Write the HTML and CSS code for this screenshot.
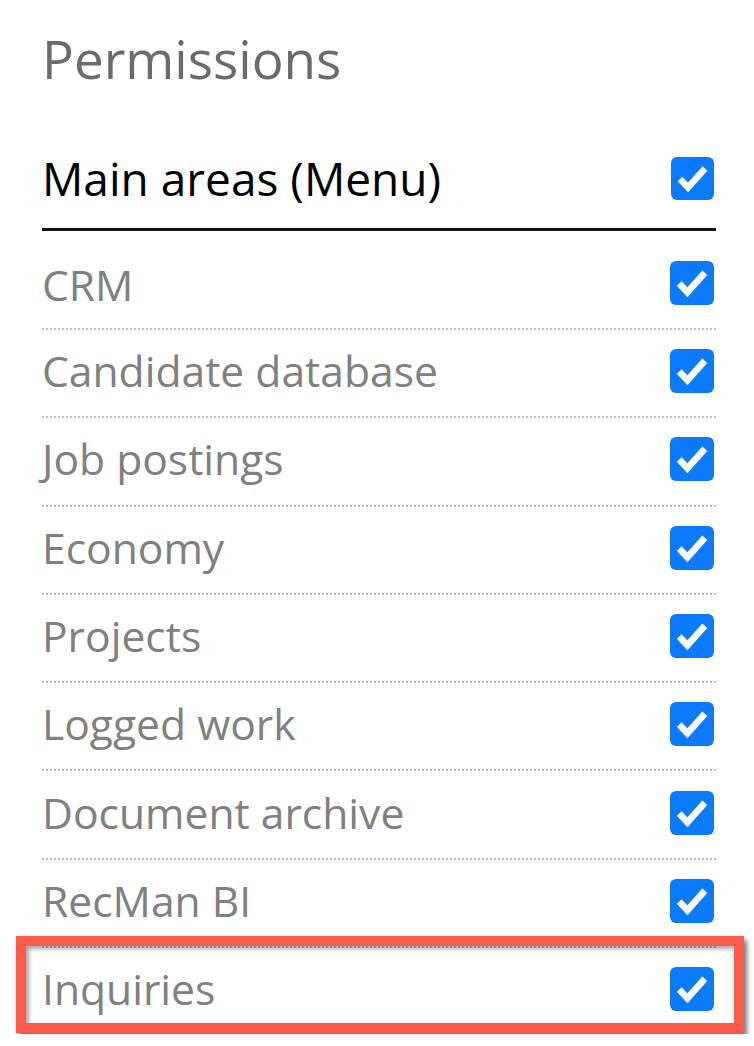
FILE: index.html
```html
<!DOCTYPE html>
<html lang="en">
<head>
<meta charset="utf-8">
<title>Permissions</title>
<link rel="stylesheet" href="styles.css">
</head>
<body>
<div class="panel">
  <h1 class="title">Permissions</h1>
  <div class="group-head">
    <span class="group-label">Main areas (Menu)</span>
    <span class="check check-head"><svg viewBox="0 0 43 43"><polyline points="9,22 17,30.5 34,11.5"/></svg></span>
  </div>
  <ul class="list">
    <li class="row row-first"><span class="label">CRM</span><span class="check"><svg viewBox="0 0 43 43"><polyline points="9,22 17,30.5 34,11.5"/></svg></span></li>
    <li class="row"><span class="label">Candidate database</span><span class="check"><svg viewBox="0 0 43 43"><polyline points="9,22 17,30.5 34,11.5"/></svg></span></li>
    <li class="row"><span class="label">Job postings</span><span class="check"><svg viewBox="0 0 43 43"><polyline points="9,22 17,30.5 34,11.5"/></svg></span></li>
    <li class="row"><span class="label">Economy</span><span class="check"><svg viewBox="0 0 43 43"><polyline points="9,22 17,30.5 34,11.5"/></svg></span></li>
    <li class="row"><span class="label">Projects</span><span class="check"><svg viewBox="0 0 43 43"><polyline points="9,22 17,30.5 34,11.5"/></svg></span></li>
    <li class="row"><span class="label">Logged work</span><span class="check"><svg viewBox="0 0 43 43"><polyline points="9,22 17,30.5 34,11.5"/></svg></span></li>
    <li class="row"><span class="label">Document archive</span><span class="check"><svg viewBox="0 0 43 43"><polyline points="9,22 17,30.5 34,11.5"/></svg></span></li>
    <li class="row"><span class="label">RecMan BI</span><span class="check"><svg viewBox="0 0 43 43"><polyline points="9,22 17,30.5 34,11.5"/></svg></span></li>
    <li class="row row-highlight"><span class="label">Inquiries</span><span class="check"><svg viewBox="0 0 43 43"><polyline points="9,22 17,30.5 34,11.5"/></svg></span><span class="highlight"></span></li>
  </ul>
</div>
</body>
</html>
```

FILE: styles.css
```css
html, body {
  margin: 0;
  padding: 0;
  background: #ffffff;
}

body {
  font-family: "Open Sans", "Noto Sans", sans-serif;
}

.panel {
  padding: 29px 38px 0 42px;
}

.title {
  margin: 0 0 39px;
  font-size: 53px;
  line-height: 60px;
  font-weight: 400;
  color: #6b6b6b;
}

.group-head {
  display: flex;
  align-items: center;
  justify-content: space-between;
  padding: 28px 0 27px;
  border-bottom: 3px solid #111111;
}

.group-label {
  font-size: 46px;
  line-height: 45px;
  color: #000000;
}

.list {
  list-style: none;
  margin: 0;
  padding: 10.7px 0 0;
}

.row {
  display: flex;
  align-items: center;
  justify-content: space-between;
  height: 86.3px;
  border-bottom: 2px dotted #bdbdbd;
}

.row-first .label {
  padding-bottom: 2px;
}

.label {
  font-size: 42.6px;
  line-height: 42px;
  padding-bottom: 6px;
  color: #808080;
}

.check {
  display: block;
  width: 44px;
  height: 44px;
  margin: 0 2px 4px 0;
  background: #0a7bff;
  border-radius: 6px;
}

.check-head {
  width: 43px;
  height: 43px;
  margin: 0 2px 0 0;
}

.check svg {
  display: block;
  width: 100%;
  height: 100%;
}

.check polyline {
  fill: none;
  stroke: #ffffff;
  stroke-width: 6.5;
  stroke-linecap: butt;
  stroke-linejoin: miter;
}

.row-highlight {
  position: relative;
  border-bottom: none;
}

.highlight {
  position: absolute;
  top: -12px;
  left: -26px;
  right: -28px;
  height: 97px;
  box-sizing: border-box;
  border: 10px solid #fe5a4b;
  box-shadow: 3px 4px 5px rgba(0, 0, 0, 0.55), inset 3px 3px 4px rgba(0, 0, 0, 0.35);
  pointer-events: none;
}
```
